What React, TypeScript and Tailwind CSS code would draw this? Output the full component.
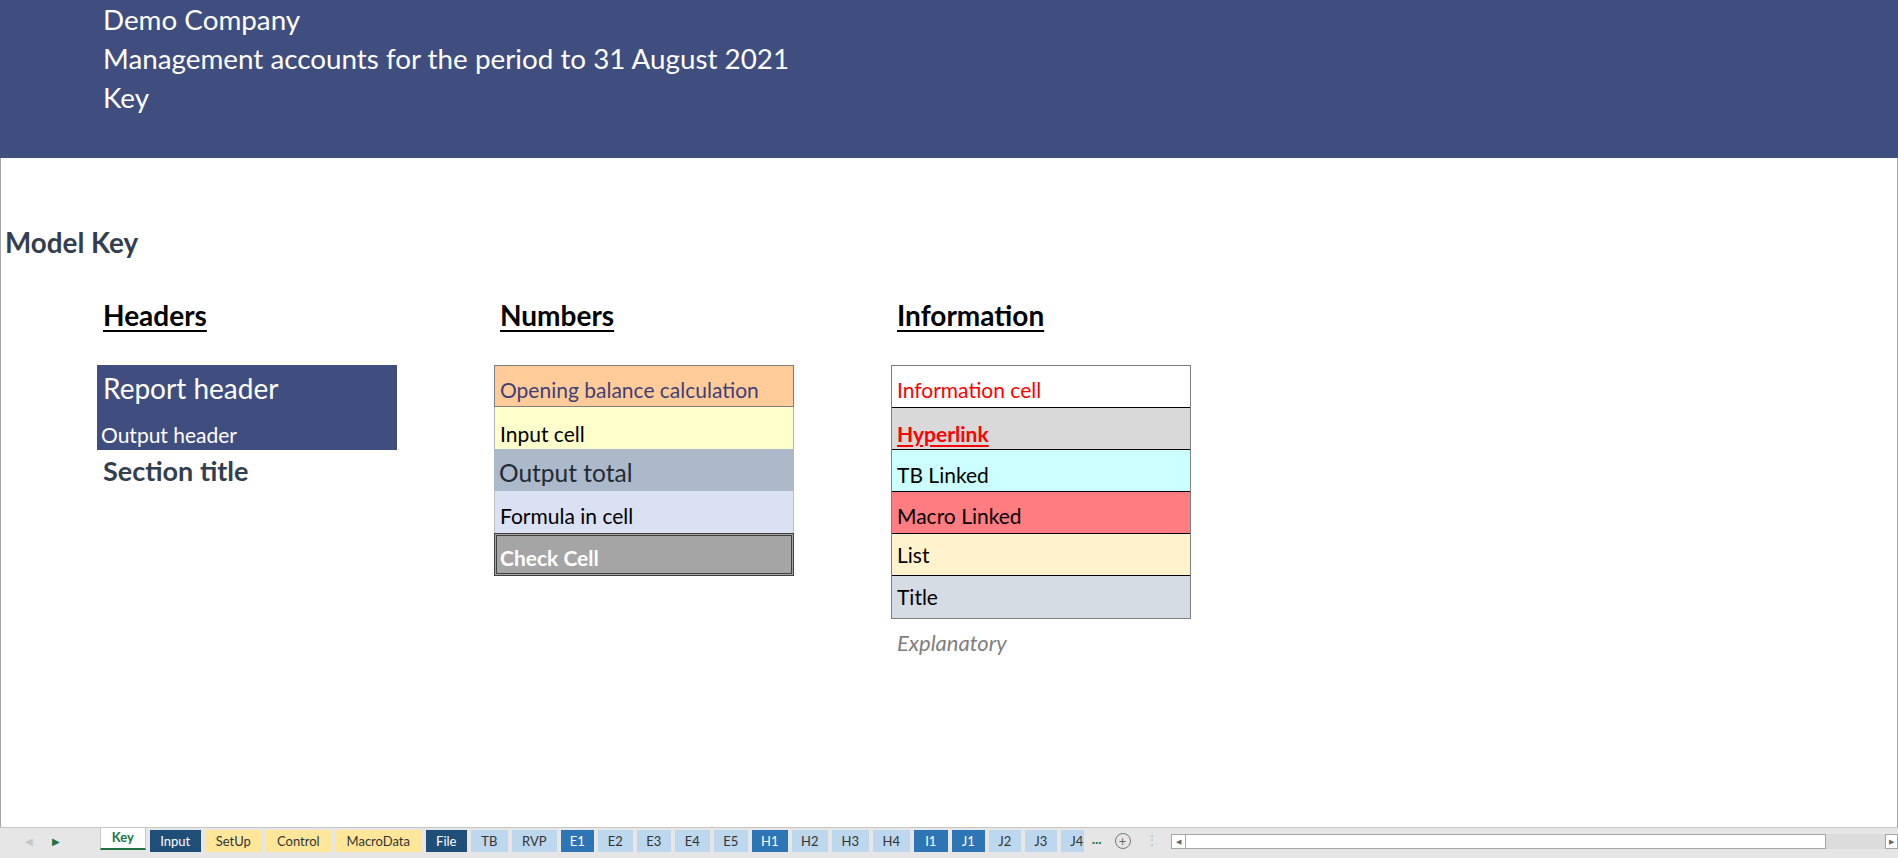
import React from "react";

type Tab = { name: string; w: string; cls: string };

const tabs: Tab[] = [
  { name: "Input", w: "w-[51px]", cls: "bg-[#1f4e78] text-white" },
  { name: "SetUp", w: "w-[57px]", cls: "bg-[#ffe699] text-[#333]" },
  { name: "Control", w: "w-[65px]", cls: "bg-[#ffe699] text-[#333]" },
  { name: "MacroData", w: "w-[87px]", cls: "bg-[#ffe699] text-[#333]" },
  { name: "File", w: "w-[41px]", cls: "bg-[#1f4e78] text-white" },
  { name: "TB", w: "w-[37px]", cls: "bg-[#bdd7ee] text-[#333]" },
  { name: "RVP", w: "w-[45px]", cls: "bg-[#bdd7ee] text-[#333]" },
  { name: "E1", w: "w-[33px]", cls: "bg-[#2e75b6] text-white" },
  { name: "E2", w: "w-[35px]", cls: "bg-[#bdd7ee] text-[#333]" },
  { name: "E3", w: "w-[34px]", cls: "bg-[#bdd7ee] text-[#333]" },
  { name: "E4", w: "w-[35px]", cls: "bg-[#bdd7ee] text-[#333]" },
  { name: "E5", w: "w-[34px]", cls: "bg-[#bdd7ee] text-[#333]" },
  { name: "H1", w: "w-[36px]", cls: "bg-[#2e75b6] text-white" },
  { name: "H2", w: "w-[36px]", cls: "bg-[#bdd7ee] text-[#333]" },
  { name: "H3", w: "w-[37px]", cls: "bg-[#bdd7ee] text-[#333]" },
  { name: "H4", w: "w-[37px]", cls: "bg-[#bdd7ee] text-[#333]" },
  { name: "I1", w: "w-[34px]", cls: "bg-[#2e75b6] text-white" },
  { name: "J1", w: "w-[33px]", cls: "bg-[#2e75b6] text-white" },
  { name: "J2", w: "w-[32px]", cls: "bg-[#bdd7ee] text-[#333]" },
  { name: "J3", w: "w-[32px]", cls: "bg-[#bdd7ee] text-[#333]" },
  { name: "J4", w: "w-[32px]", cls: "bg-[#bdd7ee] text-[#333]" },
];

// a keyed cell, text sits near the bottom like in Excel
function Cell({ className, pb, children }: { className: string; pb: string; children: React.ReactNode }) {
  return (
    <div className={"h-[42px] flex items-end pl-[5px] leading-none " + pb + " " + className}>
      <span>{children}</span>
    </div>
  );
}

function Heading({ children }: { children: React.ReactNode }) {
  return (
    <div className="h-[36px] pl-[6px] text-[28px] font-bold leading-[36px] text-black underline decoration-[2px] underline-offset-[4px]">
      {children}
    </div>
  );
}

export default function App() {
  return (
    <div className="h-[858px] w-[1898px] flex flex-col overflow-hidden bg-white font-[Lato,sans-serif]">
      {/* report banner */}
      <div className="h-[158px] shrink-0 bg-[#3f4e7f] pl-[103px] text-[27.8px] leading-[39px] text-white">
        <div>Demo Company</div>
        <div>Management accounts for the period to 31 August 2021</div>
        <div>Key</div>
      </div>

      <div className="flex-1 border-l border-r border-[#a6a6a6]">
        <div className="mt-[67px] h-[36px] pl-[4px] text-[27.8px] font-bold leading-[36px] text-[#333f4f]">Model Key</div>

        <div className="mt-[36px] ml-[96px] flex gap-[97px]">
          {/* headers */}
          <div className="w-[300px]">
            <Heading>Headers</Heading>
            <div className="mt-[32px] bg-[#3f4e7f] text-white">
              <div className="h-[42px] flex items-end pl-[6px] pb-[5px] text-[28px] leading-none">Report header</div>
              <div className="h-[43px] flex items-end pl-[4px] pb-[5px] text-[21px] leading-none">Output header</div>
            </div>
            <div className="h-[42px] flex items-end pl-[6px] pb-[8px] text-[27px] font-bold leading-none text-[#333f4f]">Section title</div>
          </div>

          {/* numbers */}
          <div className="w-[300px]">
            <Heading>Numbers</Heading>
            <div className="mt-[32px] text-[21px]">
              <Cell pb="pb-[6px]" className="bg-[#ffcc99] text-[#3f3f76] border border-[#7f7f7f]">Opening balance calculation</Cell>
              <Cell pb="pb-[5px]" className="bg-[#ffffcc] text-black border-x border-[#b2b2b2]">Input cell</Cell>
              <Cell pb="pb-[6px]" className="bg-[#acb9ca] text-[#222b35] text-[24.5px]">Output total</Cell>
              <Cell pb="pb-[7px]" className="bg-[#d9e1f2] text-black border-x border-[#c0c0c0]">Formula in cell</Cell>
              <div className="h-[43px] border-[3px] border-double border-[#3f3f3f] bg-[#a5a5a5] flex items-end pl-[3px] pb-[5px] leading-none font-bold text-white">
                Check Cell
              </div>
            </div>
          </div>

          {/* information */}
          <div className="w-[300px]">
            <Heading>Information</Heading>
            <div className="mt-[32px] border border-[#7f7f7f] text-[21px]">
              <Cell pb="pb-[7px]" className="bg-white text-[#ff0000] border-b border-black">Information cell</Cell>
              <Cell pb="pb-[5px]" className="bg-[#d9d9d9] text-[#ff0000] font-bold underline decoration-[2px] underline-offset-[3px] border-b border-black">Hyperlink</Cell>
              <Cell pb="pb-[6px]" className="bg-[#ccffff] text-black border-b border-black">TB Linked</Cell>
              <Cell pb="pb-[7px]" className="bg-[#ff7c80] text-black border-b border-black">Macro Linked</Cell>
              <Cell pb="pb-[10px]" className="bg-[#fff2cc] text-black border-b border-black">List</Cell>
              <Cell pb="pb-[11px]" className="bg-[#d6dce4] text-black">Title</Cell>
            </div>
            <div className="h-[42px] flex items-end pl-[6px] pb-[7px] text-[22px] italic leading-none text-[#7f7f7f]">Explanatory</div>
          </div>
        </div>
      </div>

      {/* sheet tabs */}
      <div className="h-[31px] shrink-0 border-t border-[#c6c6c6] bg-[#e6e6e6] flex items-start text-[13px] leading-none">
        <div className="w-[100px] h-[22px] mt-[2px] flex items-center text-[10px]">
          <span className="ml-[25px] text-[#c8c8c8]">◀</span>
          <span className="ml-[19px] text-[#217346]">▶</span>
        </div>
        <div className="w-[986px] overflow-hidden flex gap-[4px]">
          <div className="w-[46px] h-[23px] shrink-0 bg-white border-x border-[#c6c6c6] border-b-2 border-b-[#217346] flex items-center justify-center font-bold text-[#217346] -mt-[1px]">
            Key
          </div>
          {tabs.map((t) => (
            <div key={t.name} className={"h-[22px] mt-[2px] shrink-0 flex items-center justify-center " + t.w + " " + t.cls}>
              {t.name}
            </div>
          ))}
        </div>
        <div className="mt-[4px] ml-[8px] text-[14px] font-bold text-[#217346]">...</div>
        <div className="mt-[5px] ml-[13px] w-[16px] h-[16px] rounded-full border border-[#777] flex items-center justify-center text-[13px] text-[#666]">+</div>
        <div className="mt-[6px] ml-[15px] text-[12px] text-[#bbb]">⋮</div>
        <div className="ml-[13px] mt-[6px] flex h-[15px] w-[729px]">
          <div className="w-[15px] h-[15px] bg-white border border-[#a6a6a6] flex items-center justify-center text-[7px] text-[#666]">◀</div>
          <div className="w-[640px] h-[15px] bg-white border border-l-0 border-[#a6a6a6]"></div>
          <div className="flex-1 bg-[#dcdcdc]"></div>
          <div className="w-[13px] h-[15px] bg-white border border-[#a6a6a6] flex items-center justify-center text-[7px] text-[#666]">▶</div>
        </div>
      </div>
    </div>
  );
}
